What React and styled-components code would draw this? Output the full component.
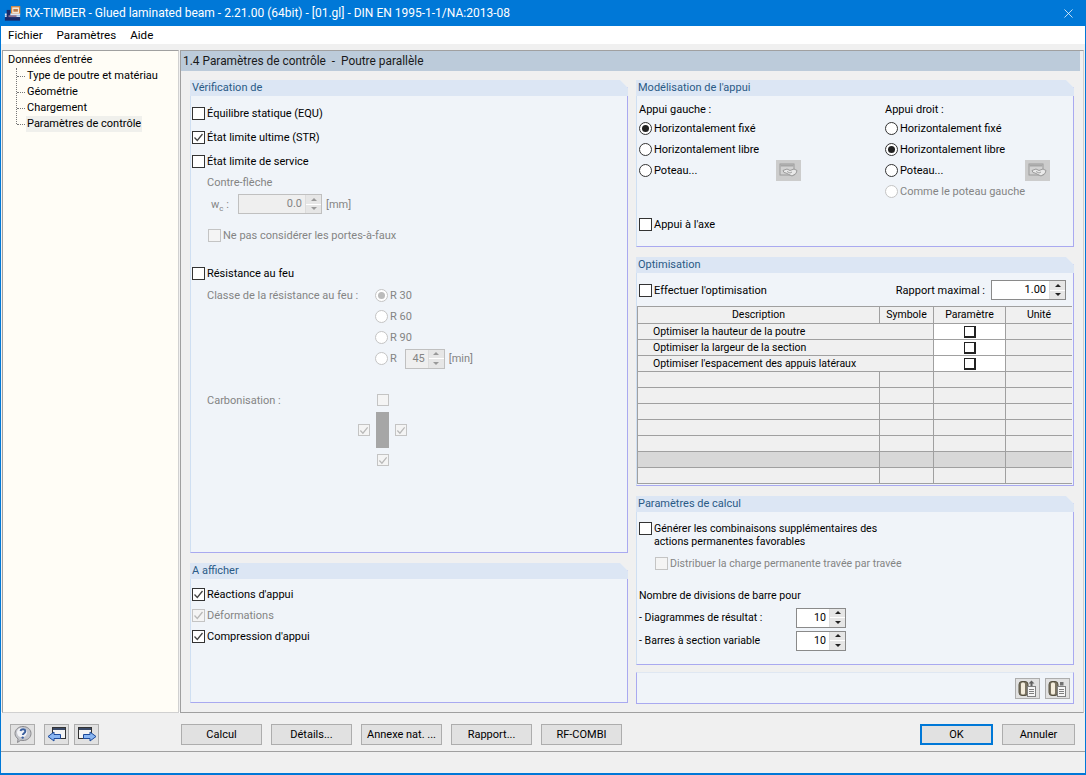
import React from 'react';
import styled, { createGlobalStyle } from 'styled-components';
import { X } from 'lucide-react';

const GlobalStyle = createGlobalStyle`
    html, body { margin: 0; padding: 0; background: #f0f0f0; }
    body { font-family: Roboto, "Noto Sans", sans-serif; font-size: 11px; color: #000; }
    * { box-sizing: border-box; }
`;

const Window = styled.div`
    width: 1086px;
    height: 775px;
    display: flex;
    flex-direction: column;
    background: #f0f0f0;
    border-left: 1px solid #0078d7;
    border-right: 1px solid #0078d7;
    border-bottom: 2px solid #0078d7;
    overflow: hidden;
`;
const TitleBar = styled.div`
    height: 26px;
    margin: 0 -1px;
    padding: 0 10px 0 4px;
    background: #0078d7;
    color: #fff;
    display: flex;
    align-items: center;
    gap: 4px;
    font-size: 12px;
    span { flex: 1; white-space: nowrap; }
`;
const MenuBar = styled.div`
    height: 18px;
    background: #fff;
    display: flex;
    align-items: center;
    gap: 14px;
    padding-left: 7px;
    font-size: 11.6px;
`;
const Main = styled.div`
    height: 669px;
    padding-top: 6px;
    display: flex;
    gap: 1px;
    border-bottom: 1px solid #fff;
`;
const Tree = styled.div`
    width: 177px;
    margin-left: 1px;
    height: 663px;
    background: #fffdf6;
    border: 1px solid #a0a0a0;
    border-right-color: #d0d0d0;
    border-bottom-color: #d0d0d0;
    padding: 1px 0 0 5px;
`;
const TreeRoot = styled.div`
    height: 16px;
    line-height: 16px;
`;
const TreeList = styled.div`
    margin-left: 8px;
    border-left: 1px dotted #777;
    height: 56px;
`;
const TreeItem = styled.div`
    position: relative;
    height: 16px;
    line-height: 16px;
    margin-left: 9px;
    padding: 0 1px;
    width: fit-content;
    min-width: ${p => (p.$active ? 115 : 0)}px;
    white-space: nowrap;
    background: ${p => (p.$active ? '#f0f0ec' : 'transparent')};
    &::before {
        content: '';
        position: absolute;
        left: -9px;
        top: 8px;
        width: 8px;
        border-top: 1px dotted #777;
    }
`;
const Content = styled.div`
    width: 904px;
    height: 663px;
    border: 1px solid #d0d0d0;
    border-left-color: #a0a0a0;
    border-top-color: #a0a0a0;
    border-bottom-color: #a0a0a0;
    padding-right: 3px;
`;
const Heading = styled.div`
    height: 20px;
    background: #bccbda;
    font-size: 11.9px;
    line-height: 20px;
    padding-left: 2px;
    color: #1a1a1a;
    white-space: pre;
`;
const Columns = styled.div`
    display: flex;
    gap: 8px;
    padding: 9px 0 0 9px;
`;
const Column = styled.div`
    width: 438px;
    display: flex;
    flex-direction: column;
    gap: 10px;
`;
const GroupBox = styled.div`
    height: ${p => p.$h}px;
    background: #f0f4f9;
    border-left: 1px solid #cfdff2;
    border-right: 1px solid #a9a9f0;
    border-bottom: 1px solid #a9a9f0;
    clip-path: polygon(0 0, calc(100% - 8px) 0, 100% 8px, 100% 100%, 0 100%);
`;
const GroupTitle = styled.div`
    height: 16px;
    margin: 0 -1px;
    background: #dce6f4;
    color: #2a5a86;
    line-height: 16px;
    padding-left: 2px;
`;
const GroupBody = styled.div`
    padding: ${p => p.$pad || '0'};
    font-size: ${p => p.$fs || 11}px;
    display: flex;
    flex-direction: column;
`;
const Box = styled.span`
    flex: none;
    width: ${p => p.$size || 13}px;
    height: ${p => p.$size || 13}px;
    background: ${p => (p.$off ? '#f4f4f4' : '#fff')};
    border: 1px solid ${p => (p.$off ? '#c4c4c4' : '#333')};
    display: inline-flex;
    align-items: center;
    justify-content: center;
    svg { display: block; }
`;
const Round = styled.span`
    flex: none;
    width: 13px;
    height: 13px;
    border-radius: 50%;
    background: #fff;
    border: 1px solid ${p => (p.$off ? '#c4c4c4' : '#333')};
    display: inline-flex;
    align-items: center;
    justify-content: center;
    &::after {
        content: '';
        display: ${p => (p.$on ? 'block' : 'none')};
        width: 7px;
        height: 7px;
        border-radius: 50%;
        background: ${p => (p.$off ? '#bbb' : '#222')};
    }
`;
const Line = styled.div`
    display: flex;
    align-items: center;
    gap: 2px;
    height: ${p => p.$h || 21}px;
    margin-top: ${p => p.$mt || 0}px;
    margin-left: ${p => p.$ml || 0}px;
    color: ${p => (p.$off ? '#848484' : '#000')};
    white-space: nowrap;
`;
const Stack = styled.div`
    margin-left: ${p => p.$ml || 0}px;
`;
const FireGrid = styled.div`
    display: grid;
    grid-template-columns: 168px 1fr;
    margin-left: 15px;
`;
const SpinBox = styled.div`
    display: flex;
    width: ${p => p.$w}px;
    height: 20px;
    background: ${p => (p.$off ? '#efefef' : '#fff')};
    border: 1px solid ${p => (p.$off ? '#c0c0c0' : '#8a8a8a')};
    color: ${p => (p.$off ? '#848484' : '#000')};
    span { flex: 1; text-align: right; padding-right: 3px; line-height: 18px; }
`;
const SpinArrows = styled.div`
    width: 16px;
    display: flex;
    flex-direction: column;
    gap: 1px;
    border-left: 1px solid #dcdcdc;
    background: #fff;
    i {
        flex: 1;
        background: #e6e6e6;
        display: flex;
        align-items: center;
        justify-content: center;
    }
    i::after {
        content: '';
        border-left: 3px solid transparent;
        border-right: 3px solid transparent;
    }
    i:first-child::after { border-bottom: 3px solid ${p => (p.$off ? '#999' : '#222')}; }
    i:last-child::after { border-top: 3px solid ${p => (p.$off ? '#999' : '#222')}; }
`;
const SupportCols = styled.div`
    display: flex;
    padding: 3px 0 0 2px;
`;
const SupportCol = styled.div`
    flex: none;
    width: ${p => p.$w}px;
`;
const SupportLabel = styled.div`
    height: 17px;
    line-height: 17px;
    margin-top: 2px;
`;
const PostRow = styled.div`
    display: flex;
    align-items: center;
    justify-content: space-between;
    width: ${p => p.$w}px;
`;
const ToolButton = styled.button`
    width: 25px;
    height: 21px;
    padding: 0;
    background: ${p => (p.$dim ? '#cccccc' : '#e1e1e1')};
    border: 1px solid ${p => (p.$dim ? '#cccccc' : '#adadad')};
    display: inline-flex;
    align-items: center;
    justify-content: center;
`;
const OptRow = styled.div`
    display: flex;
    align-items: center;
    justify-content: space-between;
    height: 20px;
    margin: 7px 7px 6px 2px;
`;
const OptRight = styled.div`
    display: flex;
    align-items: center;
    gap: 6px;
`;
const Table = styled.div`
    display: grid;
    grid-template-columns: 242px 54px 72px 66px;
    grid-template-rows: 17px repeat(10, 16px);
    width: 435px;
    font-size: 10.5px;
    border-top: 1px solid #a0a0a0;
    border-left: 1px solid #a0a0a0;
`;
const Cell = styled.div`
    grid-column: ${p => (p.$span ? 'span 2' : 'auto')};
    background: ${p => (p.$white ? '#fff' : p.$dark ? '#d8d8d8' : '#f0f0f0')};
    border-right: 1px solid #a0a0a0;
    border-bottom: 1px solid #a0a0a0;
    line-height: 15px;
    padding-left: ${p => (p.$span ? 15 : 0)}px;
    text-align: ${p => (p.$span ? 'left' : 'center')};
    white-space: nowrap;
    display: ${p => (p.$white ? 'flex' : 'block')};
    align-items: center;
    justify-content: center;
`;
const LastCell = styled(Cell)`
    border-right: none;
`;
const ParamBox = styled.span`
    width: 12px;
    height: 12px;
    background: #fff;
    border: 1px solid #222;
    border-right-width: 2px;
    border-bottom-width: 2px;
`;
const WrapCheck = styled.div`
    display: flex;
    gap: 2px;
    line-height: 13px;
    white-space: nowrap;
`;
const CountNote = styled.div`
    height: 16px;
    line-height: 16px;
    margin: 17px 0 2px;
    white-space: nowrap;
`;
const DivRow = styled.div`
    display: flex;
    align-items: center;
    width: 207px;
    justify-content: space-between;
    height: 23px;
`;
const IconBar = styled.div`
    height: 32px;
    margin-top: -3px;
    background: #f0f4f9;
    border: 1px solid #a9a9f0;
    border-top-color: #dfe7f2;
    display: flex;
    justify-content: flex-end;
    align-items: center;
    gap: 5px;
    padding-right: 3px;
`;
const ButtonBar = styled.div`
    height: 38px;
    display: flex;
    align-items: center;
    padding: 4px 10px 0 9px;
`;
const SmallGroup = styled.div`
    display: flex;
    gap: 5px;
    margin-right: 82px;
    & > button:first-child { margin-right: 4px; }
`;
const Actions = styled.div`
    display: flex;
    gap: 9px;
    flex: ${p => (p.$fixed ? 'none' : 1)};
`;
const DialogButton = styled.button`
    width: ${p => p.$w || 81}px;
    height: 21px;
    padding: 1px 0 0;
    background: #e1e1e1;
    border: ${p => (p.$primary ? '2px solid #0078d7' : '1px solid #adadad')};
    font: inherit;
    color: #000;
`;
const StatusBar = styled.div`
    flex: 1;
    border-top: 1px solid #a0a0a0;
    background: #f0f0f0;
`;
const FireChecks = styled.div`
    display: grid;
    grid-template-columns: 12px 13px 12px;
    grid-template-rows: 12px 36px 12px;
    column-gap: 6px;
    row-gap: 6px;
    align-items: center;
    justify-items: center;
`;
const Section = styled.div`
    width: 13px;
    height: 36px;
    background: #a6a6a6;
`;
const CarbonRow = styled.div`
    display: grid;
    grid-template-columns: 151px 1fr;
    margin: 25px 0 0 15px;
`;
const CarbonLabel = styled.div`
    color: #848484;
    line-height: 14px;
`;
const Muted = styled.div`
    color: #848484;
    height: ${p => p.$h || 20}px;
    line-height: ${p => p.$h || 20}px;
    white-space: nowrap;
`;
const DeflectRow = styled.div`
    display: flex;
    align-items: center;
    gap: 4px;
    height: 22px;
    margin-left: 19px;
    color: #848484;
`;
const DeflectLabel = styled.span`
    width: 23px;
    white-space: nowrap;
    sub { font-size: 8px; line-height: 0; }
`;
const Blank = styled.span``;

const Tick = ({ off }) => (
    <svg width="11" height="11" viewBox="0 0 11 11">
        <path d="M1.5 5.5 4.3 8.5 9.5 2" fill="none" stroke={off ? '#b8b8b8' : '#444'} strokeWidth="1.3" />
    </svg>
);

const Check = ({ on, off, size }) => <Box $off={off} $size={size}>{on && <Tick off={off} />}</Box>;

const CheckLine = ({ label, on, off, h, mt, ml }) => (
    <Line $h={h} $mt={mt} $ml={ml} $off={off}>
        <Check on={on} off={off} />
        {label}
    </Line>
);

const RadioLine = ({ label, on, off }) => (
    <Line $off={off}>
        <Round $on={on} $off={off} />
        {label}
    </Line>
);

const Spin = ({ value, w, off }) => (
    <SpinBox $w={w} $off={off}>
        <span>{value}</span>
        <SpinArrows $off={off}><i /><i /></SpinArrows>
    </SpinBox>
);

const AppLogo = () => (
    <svg width="17" height="17" viewBox="0 0 19 18">
        <rect x="8.5" y="1.5" width="9" height="8" fill="#f3e6d6" stroke="#e08a3c" strokeWidth="1.4" />
        <rect x="10.5" y="4" width="5" height="3" fill="#b9784a" />
        <rect x="1" y="9" width="17" height="2" fill="#dfe6f2" />
        <rect x="1" y="11" width="17" height="2" fill="#c9d6ea" />
        <rect x="1" y="13" width="17" height="4" fill="#1a2a68" />
        <rect x="3" y="5" width="4" height="8" fill="#1a2a68" />
        <rect x="5" y="11" width="9" height="2" fill="#8f6f8a" />
    </svg>
);

const PostIcon = () => (
    <svg width="19" height="15" viewBox="0 0 19 15">
        <rect x="1" y="1" width="14" height="11" fill="#d2d2d2" stroke="#9a9a9a" />
        <rect x="1.5" y="1.5" width="13" height="2" fill="#a6a6a6" />
        <path d="M4 7.5 8 6l3 1.5L15 6l3 1.5-1 3-4 2.5-3-1.5-3-1.5-2-.5Z" fill="#e9e9e9" stroke="#9a9a9a" />
        <path d="M8 8.5l3 1.5 2-1" fill="none" stroke="#a0a0a0" />
    </svg>
);

const HelpIcon = () => (
    <svg width="20" height="19" viewBox="0 0 20 19">
        <path d="M10 1.5c4.500 0 8 3 8 7s-3.500 7-8 7c-.8 0-1.500-.1-2.200-.3L4.500 17.500l.6-3.600C3.200 12.600 2 10.700 2 8.500c0-4 3.500-7 8-7Z" fill="#c4c6cc" stroke="#8a8a8e" />
        <ellipse cx="9" cy="7.500" rx="5" ry="4.800" fill="#f2f3f6" />
        <path d="M7.500 6c.5-2.300 4.800-2.400 4.800.2 0 1.900-2.500 2-2.500 3.900" fill="none" stroke="#3a5f9e" strokeWidth="1.900" />
        <circle cx="9.700" cy="12.600" r="1.200" fill="#3a5f9e" />
    </svg>
);

const WindowArrow = ({ flip }) => (
    <svg width="20" height="17" viewBox="0 0 20 17">
        <g transform={flip ? 'translate(20 0) scale(-1 1)' : undefined}>
            <rect x="5.500" y="1.500" width="13" height="11" fill="#f4f4f4" stroke="#333" />
            <rect x="6" y="2" width="12" height="2" fill="#3a4a68" />
            <path d="M1 10.500 7 6v2.500h6.500v4H7V15Z" fill="#8ab6f2" stroke="#1c4a9c" />
        </g>
    </svg>
);

const ColumnIcon = ({ down }) => (
    <svg width="21" height="19" viewBox="0 0 21 19">
        <rect x="2" y="2.500" width="9" height="14" rx="3" fill="#7a7362" stroke="#55503f" />
        <rect x="4" y="3.500" width="4" height="12" rx="1.500" fill="#f4eddc" />
        <rect x="10.500" y="7.500" width="8" height="10" fill="#f6f6f6" stroke="#808080" />
        <path d="M12 10.500h5M12 12.500h5M12 14.500h5" stroke="#808080" />
        {down
            ? <rect x="13" y="3" width="3.500" height="3.500" fill="#707070" />
            : <path d="M14.500 1.500l3 3h-2v2.500h-2V4.500h-2Z" fill="#606060" />}
    </svg>
);

const emptyRows = [0, 1, 2, 3, 4, 5, 6];

const App = () => {
    return (
        <Window>
            <GlobalStyle />
            <TitleBar>
                <AppLogo />
                <span>RX-TIMBER - Glued laminated beam - 2.21.00 (64bit) - [01.gl] - DIN EN 1995-1-1/NA:2013-08</span>
                <X size={15} strokeWidth={1.2} color="#fff" />
            </TitleBar>
            <MenuBar>
                <div>Fichier</div>
                <div>Paramètres</div>
                <div>Aide</div>
            </MenuBar>
            <Main>
                <Tree>
                    <TreeRoot>Données d'entrée</TreeRoot>
                    <TreeList>
                        <TreeItem>Type de poutre et matériau</TreeItem>
                        <TreeItem>Géométrie</TreeItem>
                        <TreeItem>Chargement</TreeItem>
                        <TreeItem $active>Paramètres de contrôle</TreeItem>
                    </TreeList>
                </Tree>
                <Content>
                    <Heading>1.4 Paramètres de contrôle  -  Poutre parallèle</Heading>
                    <Columns>
                        <Column>
                            <GroupBox $h={473}>
                                <GroupTitle>Vérification de</GroupTitle>
                                <GroupBody $pad="5px 0 0 1px">
                                    <CheckLine label="Équilibre statique (EQU)" h={24} />
                                    <CheckLine label="État limite ultime (STR)" on h={24} />
                                    <CheckLine label="État limite de service" h={24} />
                                    <Stack $ml={15}><Muted>Contre-flèche</Muted></Stack>
                                    <DeflectRow>
                                        <DeflectLabel>w<sub>c</sub> :</DeflectLabel>
                                        <Spin value="0.0" w={84} off />
                                        <Blank>[mm]</Blank>
                                    </DeflectRow>
                                    <CheckLine label="Ne pas considérer les portes-à-faux" off h={22} mt={9} ml={16} />
                                    <CheckLine label="Résistance au feu" h={24} mt={15} />
                                    <FireGrid>
                                        <Muted $h={21}>Classe de la résistance au feu :</Muted>
                                        <div>
                                            <RadioLine label="R 30" on off />
                                            <RadioLine label="R 60" off />
                                            <RadioLine label="R 90" off />
                                            <Line $off>
                                                <Round $off />
                                                R
                                                <Stack $ml={6}><Spin value="45" w={40} off /></Stack>
                                                <Stack $ml={2}>[min]</Stack>
                                            </Line>
                                        </div>
                                    </FireGrid>
                                    <CarbonRow>
                                        <CarbonLabel>Carbonisation :</CarbonLabel>
                                        <FireChecks>
                                            <Blank />
                                            <Check off size={12} />
                                            <Blank />
                                            <Check on off size={12} />
                                            <Section />
                                            <Check on off size={12} />
                                            <Blank />
                                            <Check on off size={12} />
                                            <Blank />
                                        </FireChecks>
                                    </CarbonRow>
                                </GroupBody>
                            </GroupBox>
                            <GroupBox $h={140}>
                                <GroupTitle>A afficher</GroupTitle>
                                <GroupBody $pad="5px 0 0 1px">
                                    <CheckLine label="Réactions d'appui" on />
                                    <CheckLine label="Déformations" on off />
                                    <CheckLine label="Compression d'appui" on />
                                </GroupBody>
                            </GroupBox>
                        </Column>
                        <Column>
                            <GroupBox $h={167}>
                                <GroupTitle>Modélisation de l'appui</GroupTitle>
                                <SupportCols>
                                    <SupportCol $w={246}>
                                        <SupportLabel>Appui gauche :</SupportLabel>
                                        <RadioLine label="Horizontalement fixé" on />
                                        <RadioLine label="Horizontalement libre" />
                                        <PostRow $w={162}>
                                            <RadioLine label="Poteau..." />
                                            <ToolButton $dim><PostIcon /></ToolButton>
                                        </PostRow>
                                        <CheckLine label="Appui à l'axe" mt={33} />
                                    </SupportCol>
                                    <SupportCol $w={180}>
                                        <SupportLabel>Appui droit :</SupportLabel>
                                        <RadioLine label="Horizontalement fixé" />
                                        <RadioLine label="Horizontalement libre" on />
                                        <PostRow $w={165}>
                                            <RadioLine label="Poteau..." />
                                            <ToolButton $dim><PostIcon /></ToolButton>
                                        </PostRow>
                                        <RadioLine label="Comme le poteau gauche" off />
                                    </SupportCol>
                                </SupportCols>
                            </GroupBox>
                            <GroupBox $h={229}>
                                <GroupTitle>Optimisation</GroupTitle>
                                <OptRow>
                                    <CheckLine label="Effectuer l'optimisation" />
                                    <OptRight>
                                        Rapport maximal :
                                        <Spin value="1.00" w={75} />
                                    </OptRight>
                                </OptRow>
                                <Table>
                                    <Cell>Description</Cell>
                                    <Cell>Symbole</Cell>
                                    <Cell>Paramètre</Cell>
                                    <LastCell>Unité</LastCell>
                                    <Cell $span>Optimiser la hauteur de la poutre</Cell>
                                    <Cell $white><ParamBox /></Cell>
                                    <LastCell />
                                    <Cell $span>Optimiser la largeur de la section</Cell>
                                    <Cell $white><ParamBox /></Cell>
                                    <LastCell />
                                    <Cell $span>Optimiser l'espacement des appuis latéraux</Cell>
                                    <Cell $white><ParamBox /></Cell>
                                    <LastCell />
                                    {emptyRows.map(row => (
                                        <React.Fragment key={row}>
                                            <Cell $dark={row === 5} />
                                            <Cell $dark={row === 5} />
                                            <Cell $dark={row === 5} />
                                            <LastCell $dark={row === 5} />
                                        </React.Fragment>
                                    ))}
                                </Table>
                            </GroupBox>
                            <GroupBox $h={169}>
                                <GroupTitle>Paramètres de calcul</GroupTitle>
                                <GroupBody $pad="10px 0 0 2px" $fs={10.6}>
                                    <WrapCheck>
                                        <Check />
                                        <div>Générer les combinaisons supplémentaires des<br />actions permanentes favorables</div>
                                    </WrapCheck>
                                    <CheckLine label="Distribuer la charge permanente travée par travée" off h={16} mt={7} ml={16} />
                                    <CountNote>Nombre de divisions de barre pour</CountNote>
                                    <DivRow>
                                        - Diagrammes de résultat :
                                        <Spin value="10" w={50} />
                                    </DivRow>
                                    <DivRow>
                                        - Barres à section variable
                                        <Spin value="10" w={50} />
                                    </DivRow>
                                </GroupBody>
                            </GroupBox>
                            <IconBar>
                                <ToolButton><ColumnIcon /></ToolButton>
                                <ToolButton><ColumnIcon down /></ToolButton>
                            </IconBar>
                        </Column>
                    </Columns>
                </Content>
            </Main>
            <ButtonBar>
                <SmallGroup>
                    <ToolButton><HelpIcon /></ToolButton>
                    <ToolButton><WindowArrow /></ToolButton>
                    <ToolButton><WindowArrow flip /></ToolButton>
                </SmallGroup>
                <Actions>
                    <DialogButton>Calcul</DialogButton>
                    <DialogButton>Détails...</DialogButton>
                    <DialogButton>Annexe nat. ...</DialogButton>
                    <DialogButton>Rapport...</DialogButton>
                    <DialogButton>RF-COMBI</DialogButton>
                </Actions>
                <Actions $fixed>
                    <DialogButton $primary $w={73}>OK</DialogButton>
                    <DialogButton $w={73}>Annuler</DialogButton>
                </Actions>
            </ButtonBar>
            <StatusBar />
        </Window>
    );
};

export default App;
